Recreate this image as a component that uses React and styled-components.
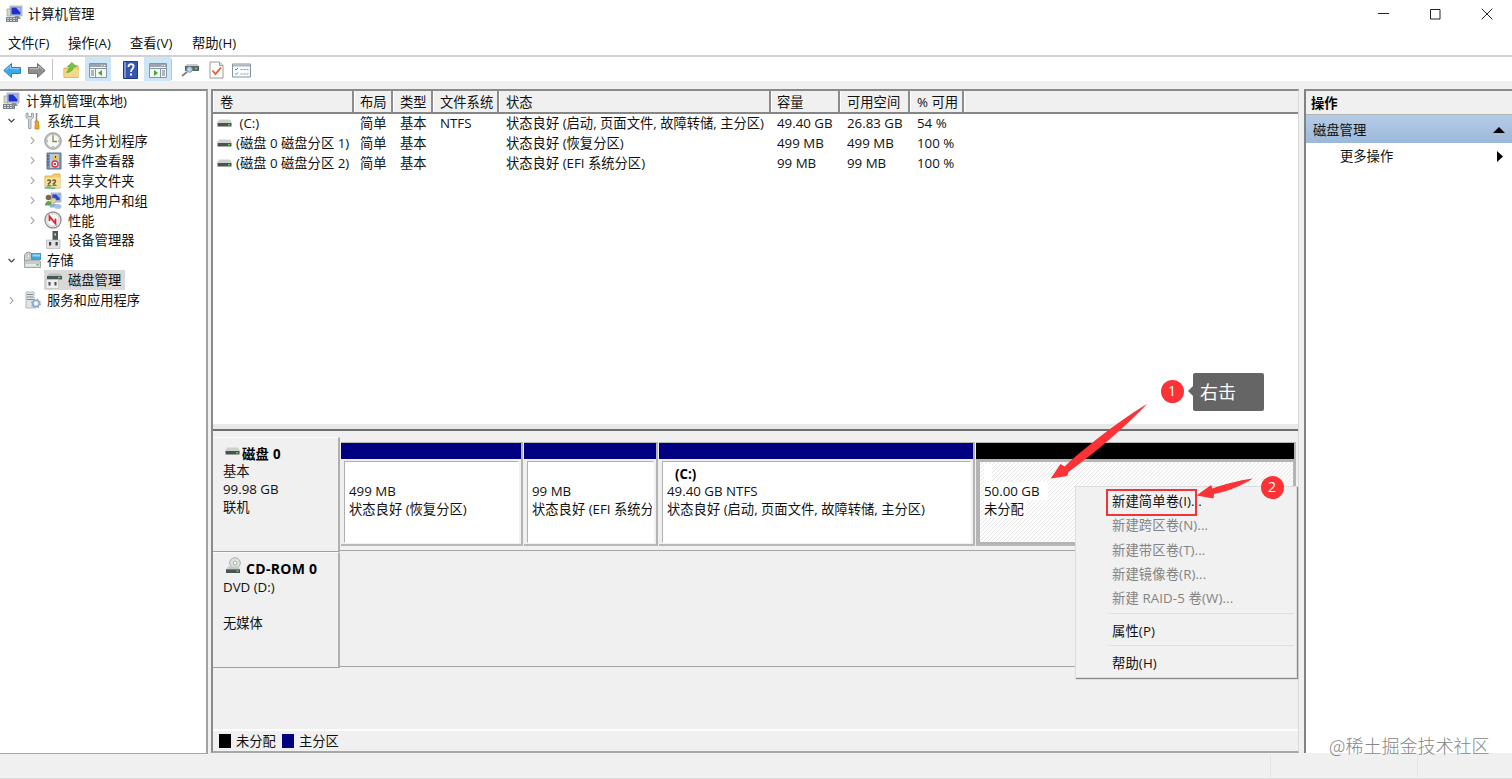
import React from 'react';
import styled, { createGlobalStyle, css } from 'styled-components';

const GlobalStyle = createGlobalStyle`
  * { box-sizing: border-box; }
  body {
    margin: 0;
    overflow: hidden;
    background: #f0f0f0;
    color: #111;
    font-family: "Open Sans", "Noto Sans CJK SC", sans-serif;
    font-size: 13.3px;
    line-height: 20px;
  }
  svg { display: block; flex: none; }
`;

const Window = styled.div`
  position: relative;
  display: flex;
  flex-direction: column;
  width: 1512px;
  height: 779px;
  overflow: hidden;
  white-space: nowrap;
`;

/* ---------- title, menu and tool bars ---------- */

const TitleBar = styled.header`
  display: flex;
  align-items: center;
  height: 31px;
  padding: 0 19px 3px 5px;
  background: #fff;
`;
const Title = styled.span`
  flex: 1;
  margin-left: 5px;
`;
const WindowButtons = styled.div`
  display: flex;
  gap: 40px;
`;
const MenuBar = styled.nav`
  display: flex;
  height: 26px;
  padding: 2px 0 0 8px;
  gap: 18px;
  background: #fff;
  border-bottom: 2px solid #d2d2d2;
`;
const MenuEntry = styled.span`
  width: ${(p) => p.$w}px;
`;
const ToolBar = styled.div`
  display: flex;
  height: 24px;
  background: #fff;
`;
const Tool = styled.span`
  display: flex;
  align-items: center;
  justify-content: center;
  width: ${(p) => p.$w}px;
  padding-top: 2px;
  background: ${(p) => (p.$on ? '#cce6f8' : 'transparent')};
  margin-right: ${(p) => p.$gap || 0}px;
`;
const ToolLine = styled.i`
  width: 1px;
  margin: 2px ${(p) => p.$after}px 1px ${(p) => p.$before}px;
  background: #c4c4c4;
`;

/* ---------- panes ---------- */

const Panes = styled.main`
  display: flex;
  height: 673px;
  padding-top: 8px;
  background: #f0f0f0;
`;
const TreePane = styled.aside`
  width: 208px;
  height: 665px;
  background: #fff;
  border-top: 2px solid #8a8a8a;
  border-right: 2px solid #a2a2a2;
  border-bottom: 1px solid #a8a8a8;
`;
const TreeRow = styled.div`
  display: flex;
  align-items: center;
  height: 19.93px;
  padding-left: ${(p) => p.$indent}px;
`;
const Chevron = styled.span`
  display: flex;
  justify-content: center;
  width: 23px;
`;
const TreeLabel = styled.span`
  display: flex;
  align-items: center;
  height: 19.9px;
  gap: 6px;
  padding: 0 4px 0 0;
  background: ${(p) => (p.$selected ? '#d9d9d9' : 'transparent')};
`;

const CenterPane = styled.section`
  display: flex;
  flex-direction: column;
  width: 1088px;
  height: 664px;
  margin-left: 3px;
  border: solid #8a8a8a;
  border-width: 2px 1px 2px 2px;
  border-bottom-color: #a8a8a8;
  border-right-color: #dadada;
`;
const VolumeList = styled.div`
  height: 340px;
  background: #fff;
  border-bottom: 2px solid #6e6e6e;
  box-shadow: inset 0 -5px 0 #e8e8e8;
`;
const HeaderRow = styled.div`
  display: flex;
  height: 23px;
  background: #f0f0f0;
  border-bottom: 2px solid #868686;
`;
const HeaderCell = styled.span`
  width: ${(p) => p.$w}px;
  padding: 1px 0 0 ${(p) => p.$pad}px;
  border-right: ${(p) => (p.$last ? 0 : 2)}px solid #8c8c8c;
  border-left: 1px solid #fff;
`;
const VolumeRow = styled.div`
  display: flex;
  height: 20px;
`;
const VolumeCell = styled.span`
  display: flex;
  align-items: center;
  height: 18px;
  width: ${(p) => p.$w}px;
  padding-left: ${(p) => p.$pad}px;
  gap: ${(p) => p.$gap || 0}px;
`;

const DiskArea = styled.div`
  flex: 1;
  padding-top: 6px;
`;
const DiskRow = styled.div`
  display: flex;
  height: ${(p) => p.$h}px;
`;
const DiskInfo = styled.div`
  width: 127px;
  height: ${(p) => p.$h}px;
  padding: ${(p) => p.$top}px 0 0 10px;
  line-height: 18px;
  border-right: 2px solid #b0b0b0;
  border-bottom: 1px solid #a0a0a0;
  border-top: 1px solid #fafafa;
`;
const DiskName = styled.div`
  display: flex;
  align-items: center;
  height: ${(p) => p.$h}px;
  padding-left: 2px;
  gap: ${(p) => p.$gap}px;
  font-weight: 700;
  font-size: ${(p) => p.$size || 13.3}px;
  letter-spacing: ${(p) => p.$track}px;
  color: #000;
  svg { margin-top: ${(p) => p.$up}px; }
`;
const DiskMap = styled.div`
  display: flex;
  width: 957px;
  height: ${(p) => p.$h}px;
  padding-top: 5px;
  padding-left: 1px;
  border-bottom: 1px solid #a6a6a6;
`;
const Partition = styled.div`
  flex: none;
  width: ${(p) => p.$w}px;
  height: 104px;
  border-right: 2px solid #b4b4b4;
  border-bottom: 2px solid #b8b8b8;
  margin-right: 1px;
`;
const Stripe = styled.div`
  height: 17px;
  background: ${(p) => p.$color};
  border-top: 1px solid #b8b8b8;
`;
const hatch = css`
  border: solid #b4b4b4;
  border-width: 3px 1px 2px 4px;
  margin: 0;
  height: 85px;
  background: repeating-linear-gradient(135deg, #fff 0 1.8px, #d6d6d6 2.3px 2.5px, #fff 2.83px);
`;
const PartitionBody = styled.div`
  height: 82px;
  margin: 2px 2px 0 3px;
  padding: ${(p) => p.$top}px 1px 0 4px;
  line-height: 18px;
  background: #fff;
  border: 1px solid #b0b0b0;
  border-right-color: #fff;
  border-bottom-color: #fff;
  ${(p) => p.$free && hatch}
`;
const PartitionLine = styled.div`
  overflow: hidden;
`;
const DriveLetter = styled.div`
  height: 17px;
  padding-left: 8px;
  font-weight: 700;
  color: #000;
`;
const Plate = styled.div`
  width: ${(p) => p.$w}px;
  background: #fff;
`;
const Legend = styled.footer`
  display: flex;
  align-items: center;
  height: 22px;
  padding-left: 6px;
  border-top: 2px solid #fdfdfd;
`;
const Swatch = styled.i`
  width: 12px;
  height: 14px;
  margin-right: 5px;
  background: ${(p) => p.$color};
`;
const LegendText = styled.span`
  width: 46px;
`;

const ActionPane = styled.aside`
  flex: 1;
  height: 664px;
  margin-left: 5px;
  background: #fff;
  border-top: 2px solid #8a8a8a;
  border-left: 2px solid #828282;
`;
const ActionTitle = styled.div`
  height: 24px;
  padding: 2px 0 0 5px;
  font-weight: 700;
  color: #000;
  background: #f0f0f0;
  border-bottom: 1px solid #b4b4b4;
`;
const ActionGroup = styled.div`
  display: flex;
  align-items: center;
  justify-content: space-between;
  height: 28px;
  padding: 1px 7px 0 7px;
  background: linear-gradient(#b5cce7, #9bb8d9);
`;
const ActionItem = styled(ActionGroup)`
  background: none;
  height: 26px;
  padding: 0 9px 0 34px;
`;
const StatusBar = styled.footer`
  display: flex;
  flex: 1;
  padding-left: 1270px;
  background: #f0f0f0;
  border-bottom: 1px solid #dcdcdc;
`;
const StatusCell = styled.i`
  flex: none;
  width: 147px;
  border-left: 1px solid #e6e6e6;
`;

/* ---------- overlays ---------- */

const ContextMenu = styled.div`
  position: absolute;
  left: 1075px;
  top: 486px;
  width: 222px;
  height: 192px;
  padding: 2px 2px 0 36px;
  background: #f1f1f1;
  border: 1px solid #dcdcdc;
  box-shadow: 1px 1px 1px #8a8a8a;
`;
const MenuItem = styled.div`
  height: 24.35px;
  line-height: 24.4px;
  letter-spacing: 0.12px;
  color: ${(p) => (p.$off ? '#838383' : '#111')};
`;
const MenuLine = styled.div`
  height: 1px;
  margin: 2px 0 5px -4px;
  background: #dedede;
`;
const Highlight = styled.div`
  position: absolute;
  left: 1106px;
  top: 488.5px;
  width: 91px;
  height: 27px;
  border: 2px solid #f2333a;
`;
const StepBadge = styled.div`
  position: absolute;
  left: ${(p) => p.$x}px;
  top: ${(p) => p.$y}px;
  width: 23px;
  height: 23px;
  border-radius: 50%;
  background: #fb3236;
  color: #fff;
  font-size: 14px;
  line-height: 21px;
  text-align: center;
`;
const Callout = styled.div`
  position: absolute;
  left: 1193px;
  top: 373px;
  width: 71px;
  height: 38px;
  padding-left: 7px;
  border-radius: 2px;
  background: #656565;
  color: #fff;
  font-size: 18px;
  line-height: 39px;
  &::before {
    content: "";
    position: absolute;
    left: -5px;
    top: 13px;
    border: 5px solid transparent;
    border-left: 0;
    border-right-color: #656565;
  }
`;
const Arrows = styled.svg`
  position: absolute;
  left: 1040px;
  top: 395px;
`;
const Watermark = styled.div`
  position: absolute;
  left: 1329px;
  top: 733px;
  font-family: "Noto Sans CJK SC", sans-serif;
  font-weight: 300;
  font-size: 18px;
  line-height: 24px;
  color: #868686;
  text-shadow: 0 0 1px #fff;
`;

/* ---------- icons ---------- */

const Icon = ({ w = 18, h = 18, box = '0 0 18 18', children }) => (
  <svg width={w} height={h} viewBox={box} fill="none">{children}</svg>
);
const ComputerIcon = () => (
  <Icon>
    <path d="M5 1h12v10H5z" fill="#c9ced6" stroke="#9299a5" strokeWidth=".7" />
    <path d="M6.500 2.500h9v7h-9z" fill="#1c2fd0" />
    <path d="M11 2.500h4.500v5z" fill="#a9bdf5" />
    <path d="M10 11h4l2 3H9z" fill="#8b9097" />
    <path d="M2 4h3.500v7H2z" fill="#d4d8d2" stroke="#8d938c" strokeWidth=".6" />
    <path d="M1 12h12v5H1z" fill="#7b838a" />
    <path d="M2 13.500h9.500M2 15.500h9.500" stroke="#d4d9dd" strokeDasharray="2 1" />
  </Icon>
);
const ArrowIcon = ({ flip, a, b }) => (
  <Icon w={18} h={17} box="0 0 18 17">
    <g transform={flip ? 'translate(18 0) scale(-1 1)' : undefined}>
      <path d="M.8 8.500 8.500 1.500v4h9v6h-9v4z" fill={a} stroke={b} strokeLinejoin="round" />
      <path d="M3 8 7.500 4v2.700h9" stroke="#fff" strokeOpacity=".45" />
    </g>
  </Icon>
);
const FolderUpIcon = () => (
  <Icon w={17}>
    <path d="M1 7h6l1.500-2.500H16V17H1z" fill="#f2cf6f" stroke="#d3ae54" />
    <path d="M1.500 8.500H16v8H1.500z" fill="#f6d988" />
    <path d="M3.500 11.500c1-1 3-3 3.500-6H4.500L9.500 1 14 5.500h-2.800C10.500 9 8 12 3.500 11.500z" fill="#6cc63f" stroke="#4b9d2b" strokeWidth=".6" />
  </Icon>
);
const ConsoleIcon = ({ right }) => (
  <Icon w={18} h={17} box="0 0 18 17">
    <path d="M.5 1.500h17v14H.5z" fill="#f4f6f8" stroke="#8a949e" />
    <path d="M1 2h16v3H1z" fill="#9ba5af" />
    <path d="M12.500 3.500h1M15 3.500h1" stroke="#fff" />
    <path d="M1 6.500h16" stroke="#8a949e" />
    <path d={right ? 'M11.500 7v8' : 'M6.500 7v8'} stroke="#8a949e" />
    <path d={right ? 'M13 9h3M13 11h3M13 13h3' : 'M2 9h3M2 11h3M2 13h3'} stroke="#5f7488" />
    <path d={right ? 'M5 8v6l4-3z' : 'M13 8v6l-4-3z'} fill="#3fae29" />
  </Icon>
);
const HelpIcon = () => (
  <Icon w={15} box="0 0 15 18">
    <path d="M.5.500h14v17H.5z" fill="#3656b5" stroke="#1e3787" />
    <path d="M1 1h2v16H1z" fill="#7d95dd" />
    <path d="M5.500 6c0-2 1-2.800 2.500-2.800s2.600.9 2.600 2.400c0 2-2.500 2.400-2.500 4.600v.8" stroke="#fff" strokeWidth="1.800" />
    <path d="M7 12.500h2v2H7z" fill="#fff" />
  </Icon>
);
const FindDiskIcon = () => (
  <Icon>
    <path d="m4 5 2-2h10l2 2z" fill="#c8ccd0" />
    <path d="M4 5h14v5H4z" fill="#5d6766" />
    <path d="M14 6.500h2v2h-2z" fill="#4ee04b" />
    <circle cx="8.500" cy="8.500" r="2.800" fill="#b7d8ee" stroke="#6f92ac" />
    <path d="m6 11-5 4" stroke="#8c8178" strokeWidth="2" />
  </Icon>
);
const CheckDocIcon = () => (
  <Icon w={15} box="0 0 15 18">
    <path d="M1 1h9.500L14 4.500V17H1z" fill="#fff" stroke="#9a9a9a" />
    <path d="M10.500 1v3.500H14" fill="#ddd" stroke="#9a9a9a" />
    <path d="m3.500 9.500 3 3.500 5.500-6.500" stroke="#ec6127" strokeWidth="1.900" />
  </Icon>
);
const ListIcon = () => (
  <Icon w={19} h={15} box="0 0 19 15">
    <path d="M.5 1h18v13H.5z" fill="#fbfcfd" stroke="#8793a0" />
    <path d="M1 2.500h17" stroke="#adb8c3" strokeWidth="2" />
    <path d="m3 6 1 1 2-2M3 10.500l1 1 2-2" stroke="#3189dd" />
    <path d="M8.500 6.500h2m1 0h2m1 0h2M8.500 11h2m1 0h2m1 0h2" stroke="#8d99a5" />
  </Icon>
);
const ToolsIcon = () => (
  <Icon>
    <path d="M3 1.500v4l2.500 2V16.500h2.500V7.500l2.500-2v-4L8.500 1v3.500H5V1z" fill="#d2d6da" stroke="#8d9398" strokeWidth=".8" />
    <path d="M13.500 1v8" stroke="#8b8f93" strokeWidth="1.500" />
    <path d="M12 9h3l1 2-.7 1 .7 1v4h-4v-4l.7-1-.7-1z" fill="#f2a520" stroke="#ba7614" strokeWidth=".7" />
  </Icon>
);
const ClockIcon = () => (
  <Icon>
    <circle cx="9" cy="9" r="8.300" fill="#c3c6c8" stroke="#85888c" strokeWidth=".8" />
    <circle cx="9" cy="9" r="6.600" fill="#f8f8f0" stroke="#a7aaac" strokeWidth=".5" />
    <path d="M9 4v5.500h4" stroke="#8c8450" strokeWidth="1.300" />
    <path d="M9 3v1M9 14v1M3 9h1M14 9h1" stroke="#567fb0" />
  </Icon>
);
const EventIcon = () => (
  <Icon>
    <path d="M3 1h14v16H3z" fill="#8199bb" stroke="#58708f" />
    <path d="M6 2h9v14H6z" fill="#b9c9dc" />
    <path d="M3 4h2M3 7h2M3 10h2M3 13h2" stroke="#334a68" />
    <path d="m11.500 2 3.500 6H8z" fill="#f3c33f" />
    <path d="M11.500 4v2" stroke="#553c10" />
    <circle cx="11" cy="12" r="3" fill="#fff" stroke="#d9363b" strokeWidth="1.300" />
    <path d="m10 11 2 2m0-2-2 2" stroke="#d9363b" />
  </Icon>
);
const SharedIcon = () => (
  <Icon>
    <path d="M1 4h7l1.500-2H16v14H1z" fill="#f2ce6d" stroke="#d8b45b" />
    <path d="M1.500 5.500H16v10H1.500z" fill="#fae19b" />
    <path d="M3.500 9c.5-1.500 3-1.500 3 .3 0 1.200-1.500 1.800-2.500 3.200M8.500 9c.5-1.500 3-1.500 3 .3 0 1.200-1.500 1.800-2.500 3.200" stroke="#6d5f38" strokeWidth="1.500" />
    <path d="M2.500 14.500c1-2.500 4-2.500 5.500 0zM8 14c1-2.500 4-2.500 5 0z" fill="#4b9950" />
    <path d="M1 16.500c3-2 6 1 10-.5" stroke="#5bb7a7" strokeWidth="1.500" />
  </Icon>
);
const UsersIcon = () => (
  <Icon>
    <path d="M7 1h10v9H7z" fill="#cdd3dc" stroke="#8c95a5" strokeWidth=".7" />
    <path d="M8.300 2.300h7.500v6H8.300z" fill="#2949ce" />
    <path d="M12 2.300h3.800v4z" fill="#a8bbf1" />
    <circle cx="4.500" cy="5.500" r="2.800" fill="#7d6a43" />
    <path d="M1 13.500c0-6 7-6 7 0z" fill="#5da14c" />
    <circle cx="9.500" cy="8.500" r="2.600" fill="#e5cf9b" stroke="#b79c5e" strokeWidth=".5" />
    <path d="M5.500 15.500c0-5.500 8-5.500 8 0z" fill="#8cb0d2" />
    <ellipse cx="14" cy="14.500" rx="3.500" ry="2.500" fill="#a5c4e4" />
  </Icon>
);
const PerfIcon = () => (
  <Icon>
    <circle cx="9" cy="9" r="8" fill="#fff" stroke="#929292" strokeWidth="1.400" />
    <circle cx="9" cy="9" r="6.200" fill="#fff" stroke="#c5caca" />
    <path d="M5.500 10V5.500l6 7V7.500" stroke="#d5262d" strokeWidth="1.800" />
  </Icon>
);
const DeviceIcon = () => (
  <Icon>
    <path d="M8.500 0h5.500v10H8.500z" fill="#55585a" />
    <path d="M10.500 2.500H12v2h-1.500z" fill="#ddd" />
    <path d="M2.500 9h13.500v8.500H2.500z" fill="#e0e1e2" stroke="#b2b5b7" strokeWidth=".7" />
    <path d="M5 11h2.200v3.500H5zM11.500 11h2.200v3.500h-2.200z" fill="#3b3f41" />
  </Icon>
);
const StorageIcon = () => (
  <Icon>
    <path d="M1.500 5c0-5 8-5 8 0v5h-8z" fill="#ced3d6" stroke="#92989c" />
    <circle cx="5.500" cy="5" r="1.500" fill="#fff" stroke="#999" strokeWidth=".6" />
    <path d="M8.500 2.500H18v6H8.500z" fill="#45a6d9" stroke="#2c7fac" strokeWidth=".7" />
    <path d="M9.500 3.500H17v2H9.500z" fill="#9bd7f2" />
    <path d="m2.500 10 2-1h11l2 1.500v6h-16v-6z" fill="#c7ccca" stroke="#888f8c" strokeWidth=".7" />
    <path d="M2.500 13h14v2.500h-14z" fill="#e7eae8" />
    <path d="M13.500 13h2v1.500h-2z" fill="#4bbf39" />
  </Icon>
);
const DiskToolIcon = () => (
  <Icon>
    <path d="m3 5 2.500-2.500H16L18 5z" fill="#b9bdbf" />
    <path d="M3 5h15v3.500H3z" fill="#4d5553" />
    <path d="M14 5.800h2.500v1.500H14z" fill="#46df41" />
    <path d="M2 8.500h12.500v9H2z" fill="#efefef" stroke="#b5b8ba" strokeWidth=".6" />
    <path d="M4.500 11h2v3.500h-2zM10.500 11h2v3.500h-2z" fill="#454a4c" />
  </Icon>
);
const ServicesIcon = () => (
  <Icon>
    <path d="M3 1h8v16H3z" fill="#e0e4e7" stroke="#a4abb2" strokeWidth=".8" />
    <path d="M4 3.500h6M4 6h6M4 8.500h6" stroke="#7f8992" />
    <circle cx="13" cy="12.500" r="3.200" fill="#dce8f4" stroke="#88aacb" strokeWidth="1.500" />
    <circle cx="13" cy="12.500" r="4.300" stroke="#88aacb" strokeWidth="1.300" strokeDasharray="1.700 1.677" />
    <circle cx="13" cy="12.500" r="1.300" fill="#fff" />
  </Icon>
);
const DriveIcon = () => (
  <Icon w={15} h={9} box="0 0 15 9">
    <path d="M2 .5h11L15 4H0z" fill="#cfd1d1" />
    <path d="M.5 4h14v3.500H.5z" fill="#4d5251" />
    <path d="M11 5h2v1.500h-2z" fill="#42e23c" />
  </Icon>
);
const CdIcon = () => (
  <Icon w={17} h={17} box="0 0 17 17">
    <circle cx="10" cy="6" r="5.300" fill="#dfe1e1" stroke="#a9adad" />
    <circle cx="10" cy="6" r="1.800" fill="#fff" stroke="#999" strokeWidth=".8" />
    <path d="m3 9.500-2 3h14l-2-3z" fill="#c7caca" />
    <path d="M1 12.300h14V16H1z" fill="#4d5251" />
    <path d="M11.500 13.300h2v1.500h-2z" fill="#42e23c" />
  </Icon>
);
const ChevronIcon = ({ open }) => (
  <svg width="9" height="9" viewBox="0 0 9 9" fill="none">
    {open
      ? <path d="m1.500 3 3 3 3-3" stroke="#444" strokeWidth="1.200" />
      : <path d="m3 1.200 3 3.300-3 3.300" stroke="#a0a0a0" strokeWidth="1.100" />}
  </svg>
);

/* ---------- data ---------- */

const menus = [['文件(F)', 42], ['操作(A)', 44], ['查看(V)', 44], ['帮助(H)', 45]];

const tree = [
  { label: '系统工具', level: 1, open: true, icon: <ToolsIcon /> },
  { label: '任务计划程序', level: 2, icon: <ClockIcon /> },
  { label: '事件查看器', level: 2, icon: <EventIcon /> },
  { label: '共享文件夹', level: 2, icon: <SharedIcon /> },
  { label: '本地用户和组', level: 2, icon: <UsersIcon /> },
  { label: '性能', level: 2, icon: <PerfIcon /> },
  { label: '设备管理器', level: 2, leaf: true, icon: <DeviceIcon /> },
  { label: '存储', level: 1, open: true, icon: <StorageIcon /> },
  { label: '磁盘管理', level: 2, leaf: true, selected: true, icon: <DiskToolIcon /> },
  { label: '服务和应用程序', level: 1, icon: <ServicesIcon /> },
];

const columns = [
  ['卷', 141, 7], ['布局', 39, 6], ['类型', 40, 7], ['文件系统', 66, 7], ['状态', 272, 7],
  ['容量', 69, 6], ['可用空间', 70, 7], ['% 可用', 54, 7],
];
const volumes = [
  ['\u00a0(C:)', '简单', '基本', 'NTFS', '状态良好 (启动, 页面文件, 故障转储, 主分区)', '49.40 GB', '26.83 GB', '54 %'],
  ['(磁盘 0 磁盘分区 1)', '简单', '基本', '', '状态良好 (恢复分区)', '499 MB', '499 MB', '100 %'],
  ['(磁盘 0 磁盘分区 2)', '简单', '基本', '', '状态良好 (EFI 系统分区)', '99 MB', '99 MB', '100 %'],
];

export default function App() {
  return (
    <>
      <GlobalStyle />
      <Window>
        <TitleBar>
          <ComputerIcon />
          <Title>计算机管理</Title>
          <WindowButtons>
            <Icon w={12} h={12} box="0 0 12 12"><path d="M1 5.500h11" stroke="#222" /></Icon>
            <Icon w={12} h={12} box="0 0 12 12"><path d="M1.500 1.500h9.500v9.500H1.500z" stroke="#222" /></Icon>
            <Icon w={12} h={12} box="0 0 12 12"><path d="m.7.700 10.600 10.600M11.300.700.700 11.300" stroke="#222" /></Icon>
          </WindowButtons>
        </TitleBar>
        <MenuBar>
          {menus.map(([m, w]) => <MenuEntry key={m} $w={w}>{m}</MenuEntry>)}
        </MenuBar>
        <ToolBar>
          <Tool $w={24}><ArrowIcon a="#3ba8e8" b="#2284c4" /></Tool>
          <Tool $w={26}><ArrowIcon flip a="#8e8e8e" b="#707070" /></Tool>
          <ToolLine $before={2} $after={5} />
          <Tool $w={27}><FolderUpIcon /></Tool>
          <Tool $w={26} $on $gap={6}><ConsoleIcon /></Tool>
          <Tool $w={27}><HelpIcon /></Tool>
          <Tool $w={27} $on><ConsoleIcon right /></Tool>
          <ToolLine $before={0} $after={5} />
          <Tool $w={26}><FindDiskIcon /></Tool>
          <Tool $w={26}><CheckDocIcon /></Tool>
          <Tool $w={25}><ListIcon /></Tool>
        </ToolBar>

        <Panes>
          <TreePane>
            <TreeRow $indent={2}>
              <TreeLabel><ComputerIcon />计算机管理(本地)</TreeLabel>
            </TreeRow>
            {tree.map((n) => (
              <TreeRow key={n.label} $indent={(n.level - 1) * 21}>
                <Chevron>{!n.leaf && <ChevronIcon open={n.open} />}</Chevron>
                <TreeLabel $selected={n.selected}>{n.icon}{n.label}</TreeLabel>
              </TreeRow>
            ))}
          </TreePane>

          <CenterPane>
            <VolumeList>
              <HeaderRow>
                {columns.map(([name, w, pad]) => <HeaderCell key={name} $w={w} $pad={pad - 1}>{name}</HeaderCell>)}
                <HeaderCell $last $w={334} $pad={0} />
              </HeaderRow>
              {volumes.map((v) => (
                <VolumeRow key={v[0]}>
                  {v.map((t, i) => (
                    <VolumeCell key={i} $w={columns[i][1]} $pad={i ? columns[i][2] : 4} $gap={4}>
                      {i === 0 && <DriveIcon />}{t}
                    </VolumeCell>
                  ))}
                </VolumeRow>
              ))}
            </VolumeList>

            <DiskArea>
              <DiskRow $h={115}>
                <DiskInfo $h={115} $top={7}>
                  <DiskName $h={17} $gap={2} $up={-4} $track={0.3}><DriveIcon />磁盘 0</DiskName>
                  <div>基本</div>
                  <div>99.98 GB</div>
                  <div>联机</div>
                </DiskInfo>
                <DiskMap $h={114}>
                  <Partition $w={182}>
                    <Stripe $color="#000080" />
                    <PartitionBody $top={20}>
                      <PartitionLine>499 MB</PartitionLine>
                      <PartitionLine>状态良好 (恢复分区)</PartitionLine>
                    </PartitionBody>
                  </Partition>
                  <Partition $w={134}>
                    <Stripe $color="#000080" />
                    <PartitionBody $top={20}>
                      <PartitionLine>99 MB</PartitionLine>
                      <PartitionLine>状态良好 (EFI 系统分区)</PartitionLine>
                    </PartitionBody>
                  </Partition>
                  <Partition $w={316}>
                    <Stripe $color="#000080" />
                    <PartitionBody $top={3}>
                      <DriveLetter>(C:)</DriveLetter>
                      <PartitionLine>49.40 GB NTFS</PartitionLine>
                      <PartitionLine>状态良好 (启动, 页面文件, 故障转储, 主分区)</PartitionLine>
                    </PartitionBody>
                  </Partition>
                  <Partition $w={320}>
                    <Stripe $color="#000" />
                    <PartitionBody $free $top={2}>
                      <Plate $w={8}>&nbsp;</Plate>
                      <Plate $w={64}>50.00 GB</Plate>
                      <Plate $w={42}>未分配</Plate>
                    </PartitionBody>
                  </Partition>
                </DiskMap>
              </DiskRow>
              <DiskRow $h={117}>
                <DiskInfo $h={116} $top={7}>
                  <DiskName $h={18} $gap={4} $up={-8} $size={14} $track={0.3}><CdIcon />CD-ROM 0</DiskName>
                  <div>DVD (D:)</div>
                  <div>&nbsp;</div>
                  <div>无媒体</div>
                </DiskInfo>
                <DiskMap $h={115} />
              </DiskRow>
            </DiskArea>
            <Legend>
              <Swatch $color="#000" /><LegendText>未分配</LegendText>
              <Swatch $color="#000080" /><LegendText>主分区</LegendText>
            </Legend>
          </CenterPane>

          <ActionPane>
            <ActionTitle>操作</ActionTitle>
            <ActionGroup>磁盘管理
              <Icon w={12} h={6} box="0 0 12 6"><path d="M0 6 6 0l6 6z" fill="#000" /></Icon>
            </ActionGroup>
            <ActionItem>更多操作
              <Icon w={6} h={11} box="0 0 6 11"><path d="M0 0v11l6-5.500z" fill="#000" /></Icon>
            </ActionItem>
          </ActionPane>
        </Panes>
        <StatusBar><StatusCell /><StatusCell /></StatusBar>

        <ContextMenu>
          <MenuItem>新建简单卷(I)...</MenuItem>
          <MenuItem $off>新建跨区卷(N)...</MenuItem>
          <MenuItem $off>新建带区卷(T)...</MenuItem>
          <MenuItem $off>新建镜像卷(R)...</MenuItem>
          <MenuItem $off>新建 RAID-5 卷(W)...</MenuItem>
          <MenuLine />
          <MenuItem>属性(P)</MenuItem>
          <MenuLine />
          <MenuItem>帮助(H)</MenuItem>
        </ContextMenu>
        <Highlight />
        <Arrows width="230" height="110" viewBox="0 0 230 110">
          <path d="M107 9 C85 22 50 48 24.500 71.500L20.500 69 10.700 83.500 27.300 81 28.500 77C55 58 85 32 107 9z" fill="#fb3236" />
          <path d="M213 83.500C200 85 185 89 172.500 93.500L171 90 156.500 100.500 173.500 103.500 174 99C190 96 202 90 213 83.500z" fill="#fb3236" />
        </Arrows>
        <StepBadge $x={1160.5} $y={380}>1</StepBadge>
        <Callout>右击</Callout>
        <StepBadge $x={1260.5} $y={476}>2</StepBadge>
        <Watermark>@稀土掘金技术社区</Watermark>
      </Window>
    </>
  );
}
